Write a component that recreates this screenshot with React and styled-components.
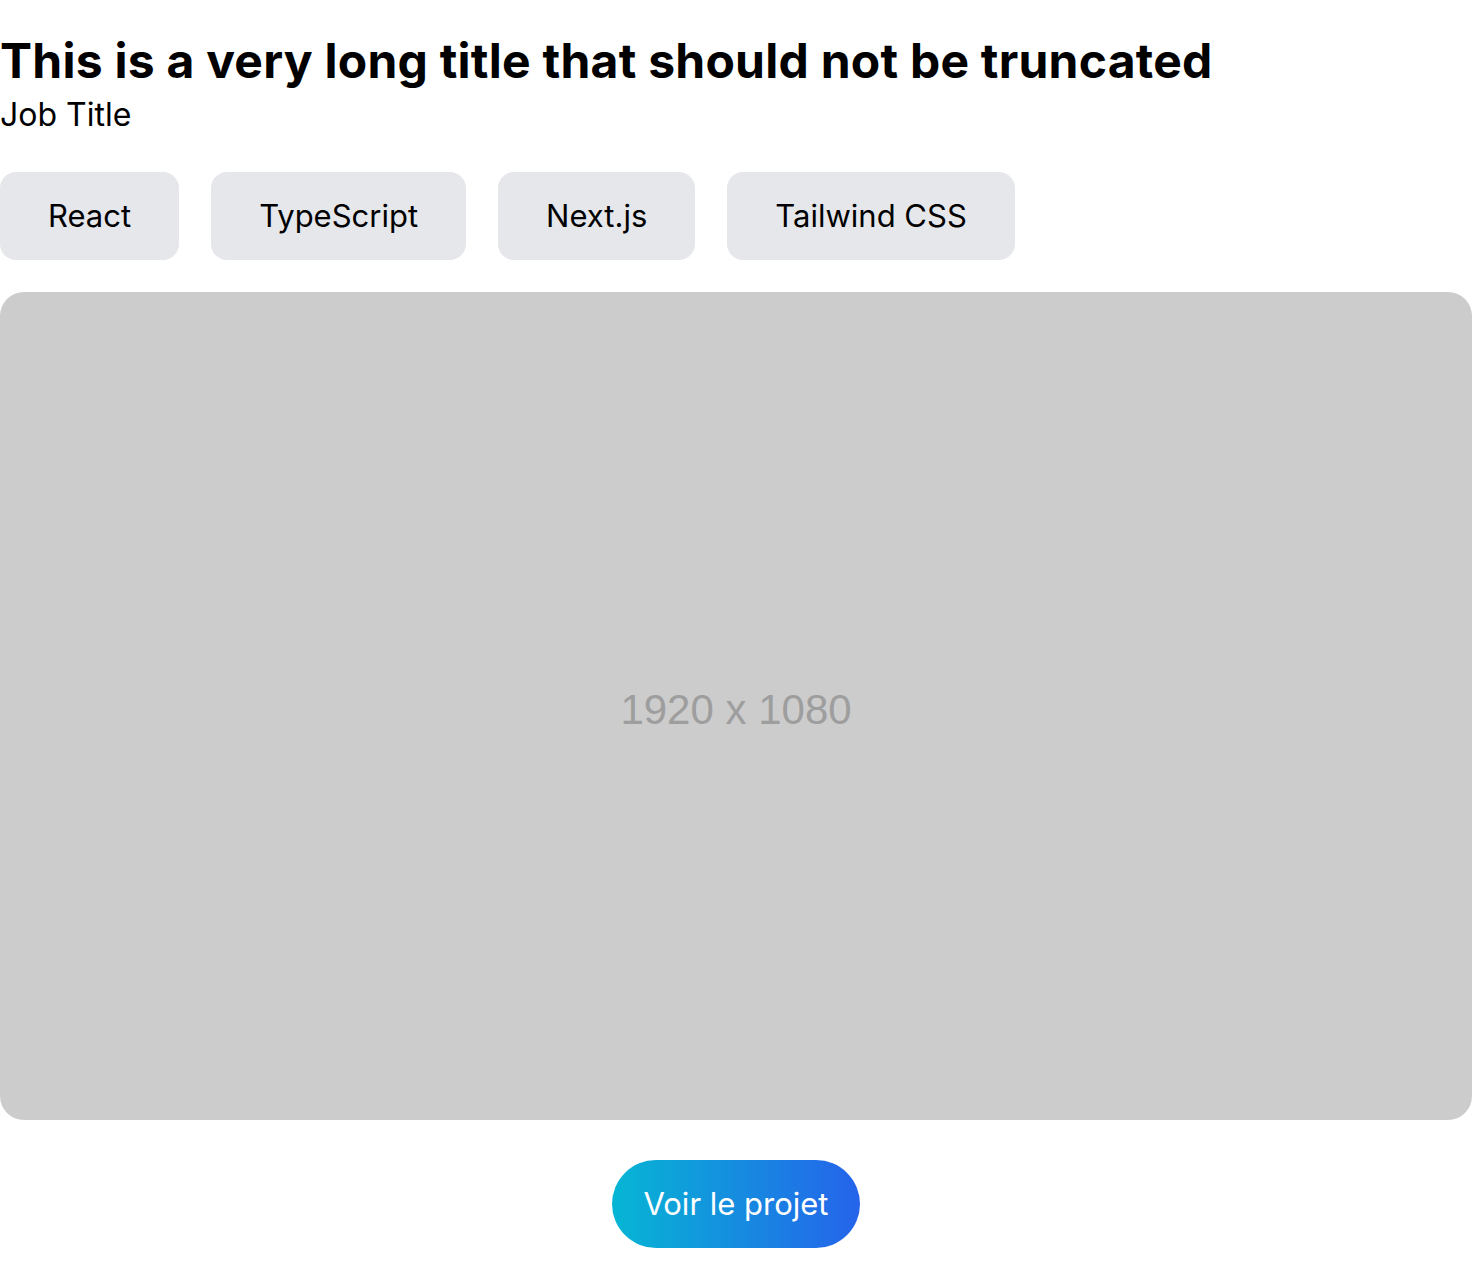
import React from "react";
import styled, { createGlobalStyle } from "styled-components";

const Global = createGlobalStyle`
  html, body { margin: 0; padding: 0; background: #ffffff; }
  body { font-family: Inter, "Noto Sans", sans-serif; color: #000; }
  * { box-sizing: border-box; }
`;

const Page = styled.main`
  display: flex;
  flex-direction: column;
  padding-top: 37px;
`;

const Header = styled.header`
  display: flex;
  flex-direction: column;
  gap: 10px;
`;

const Title = styled.h1`
  margin: 0;
  font-size: 48px;
  line-height: 48px;
  font-weight: 700;
  letter-spacing: 0.25px;
`;

const Subtitle = styled.p`
  margin: 0;
  font-size: 32px;
  line-height: 40px;
  font-weight: 400;
`;

const Tags = styled.ul`
  list-style: none;
  margin: 37px 0 0;
  padding: 0;
  display: flex;
  flex-wrap: wrap;
  gap: 32px;
`;

const Tag = styled.li`
  background: #e5e7eb;
  border-radius: 16px;
  padding: 24px 48px;
  font-size: 31px;
  line-height: 40px;
`;

const Preview = styled.div`
  margin-top: 32px;
  width: 100%;
  aspect-ratio: 16 / 9;
  background: #cccccc;
  border-radius: 24px;
  display: flex;
  align-items: center;
  justify-content: center;
  padding-top: 8px;
  color: #9e9e9e;
  font-family: "Liberation Sans", Arial, sans-serif;
  font-size: 42px;
`;

const Actions = styled.div`
  display: flex;
  justify-content: center;
  margin-top: 40px;
`;

const Button = styled.a`
  display: inline-block;
  padding: 24px 31px;
  border-radius: 9999px;
  background: linear-gradient(to right, #06b6d4, #2563eb);
  color: #ffffff;
  font-size: 31px;
  line-height: 40px;
  text-decoration: none;
`;

const tags = ["React", "TypeScript", "Next.js", "Tailwind CSS"];

export default function App() {
  return (
    <>
      <Global />
      <Page>
        <Header>
          <Title>This is a very long title that should not be truncated</Title>
          <Subtitle>Job Title</Subtitle>
        </Header>
        <Tags>
          {tags.map((t) => (
            <Tag key={t}>{t}</Tag>
          ))}
        </Tags>
        <Preview>1920 x 1080</Preview>
        <Actions>
          <Button href="#">Voir le projet</Button>
        </Actions>
      </Page>
    </>
  );
}
